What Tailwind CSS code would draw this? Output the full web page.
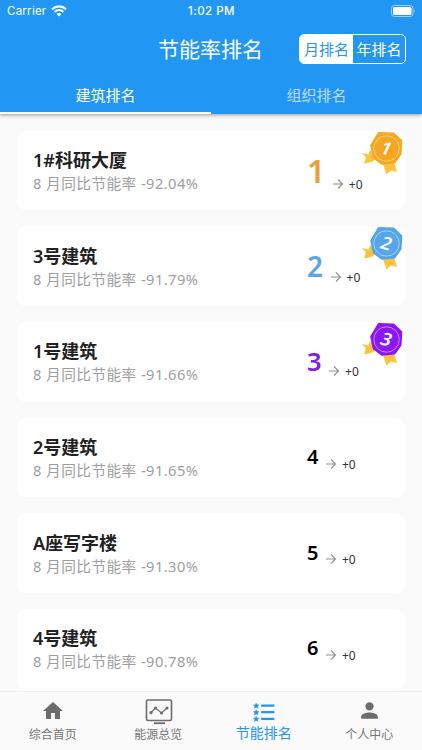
<!DOCTYPE html>
<html lang="zh-CN">
<head>
<meta charset="utf-8">
<title>节能率排名</title>
<script src="https://cdn.jsdelivr.net/npm/@tailwindcss/browser@4"></script>
</head>
<body class="w-[422px] h-[750px] overflow-hidden bg-[#fafafa] font-['Noto_Sans','Noto_Sans_CJK_SC',sans-serif]">
<div class="flex h-[750px] flex-col">
  <header class="relative z-10 h-[114px] shrink-0 bg-[#2196f3] text-white shadow-[0_1px_4px_rgba(0,0,0,0.4)]">
    <div class="grid h-[22px] grid-cols-3 items-center pr-[6px] pl-[7px] font-['Inter',sans-serif] text-[11.5px] leading-[22px]">
      <div class="flex items-center gap-[5px]"><span class="tracking-[0.25px]">Carrier</span>
        <svg class="-mt-px" width="16" height="12" viewBox="0 0 16 12" fill="none" stroke="white" stroke-width="2.1"><path d="M1 4.2C5 .4 11 .4 15 4.2M3.6 6.9C6.2 4.5 9.8 4.5 12.4 6.9"/><path d="M8 11.5 5.5 9Q8 6.9 10.5 9Z" fill="white" stroke="none"/></svg>
      </div>
      <div class="text-center font-medium tracking-[0.5px]">1:02 PM</div>
      <svg class="ml-auto" width="25" height="12" viewBox="0 0 25 12"><rect x=".5" y=".5" width="21.5" height="11" rx="3" fill="none" stroke="#9bd0fb"/><rect x="2" y="2" width="18.5" height="8" rx="1.6" fill="white"/><path d="M23.2 4v4Q24.7 6 23.2 4" fill="#9bd0fb"/></svg>
    </div>
    <div class="grid h-[54px] grid-cols-[1fr_auto_1fr] items-center pr-4">
      <h1 class="col-start-2 ml-[15px] text-[21px] leading-[54px] font-normal">节能率排名</h1>
      <div class="ml-auto flex h-[30px] w-[107px] overflow-hidden rounded-[5px] border border-white text-center text-[15px] leading-[29px]">
        <div class="w-[53px] bg-white text-[#2196f3]">月排名</div><div class="flex-1">年排名</div>
      </div>
    </div>
    <div class="grid h-[38px] grid-cols-2 text-center text-[15px] leading-[34px]">
      <div class="h-[38px] border-b-2 border-white pt-[2px]">建筑排名</div><div class="pt-[2px] text-white/70">组织排名</div>
    </div>
  </header>
  <main id="list" class="flex min-h-0 flex-1 flex-col gap-[16px] overflow-hidden px-[17px] pt-[16.5px]"></main>
  <nav class="grid h-[59px] shrink-0 grid-cols-4 border-t border-[#eeeeee] bg-[#fafafa] text-center text-[12px] text-[#757575]">
    <div class="flex flex-col items-center"><svg class="mt-[7px]" width="24" height="24" viewBox="0 0 24 24" fill="#6c6c6c"><path d="M10 20v-6h4v6h5v-8h3L12 3 2 12h3v8z"/></svg><span class="mt-[3px] leading-[18px]">综合首页</span></div>
    <div class="flex flex-col items-center"><svg class="relative left-[1px] mt-[7px]" width="28" height="26" viewBox="0 0 28 26" fill="none" stroke="#6c6c6c"><rect x="1.5" y="1" width="25" height="20.5" rx="1.5" stroke-width="1.6"/><path d="M9 24.2h11" stroke-width="1.8"/><path d="M6 13.5 10.5 9l6 5L22 9" stroke-width="1.2"/><g fill="#6c6c6c" stroke="none"><circle cx="6" cy="13.7" r="1.6"/><circle cx="10.5" cy="9" r="1.6"/><circle cx="16.5" cy="14" r="1.6"/><circle cx="22" cy="9" r="1.6"/></g></svg><span class="mt-px leading-[18px]">能源总览</span></div>
    <div class="flex flex-col items-center text-[14px] text-[#2196f3]"><svg class="mt-[10px]" width="22" height="20" viewBox="0 0 22 20" fill="#2196f3"><g stroke="#2196f3" stroke-width="2.2" stroke-linecap="round"><path d="M9 3.7h11.5M9 10.2h11.5M9 16.8h11.5"/></g><path id="star" d="M3.2 1 4 2.700 6 2.900 4.600 4.300 5 6.300 3.200 5.300 1.400 6.300 1.800 4.300.4 2.900 2.400 2.700Z" stroke="#2196f3" stroke-width=".4"/><use href="#star" y="6.6"/><use href="#star" y="13.2"/></svg><span class="leading-[22px]">节能排名</span></div>
    <div class="flex flex-col items-center"><svg class="mt-[6px]" width="25" height="25" viewBox="0 0 24 24" fill="#6c6c6c"><path d="M12 12a4 4 0 1 0 0-8 4 4 0 0 0 0 8zm0 2c-2.7 0-8 1.3-8 4v2h16v-2c0-2.7-5.3-4-8-4z"/></svg><span class="mt-[3px] leading-[18px]">个人中心</span></div>
  </nav>
</div>
<script>
const plain = 'text-[20px] font-semibold text-black';
const rows = [
  { name: '1#科研大厦', rate: '-92.04%', digit: 'text-[32px] font-semibold text-[#e6a23c]', top: 15.5, drop: 5.5, medal: ['#f5a623', '#ffd27a'] },
  { name: '3号建筑', rate: '-91.79%', digit: 'text-[28px] font-semibold text-[#5ba3ea]', top: 15, drop: 5, medal: ['#55a5ec', '#a5d4ff'] },
  { name: '1号建筑', rate: '-91.66%', digit: 'text-[25.5px] font-semibold text-[#8221e6]', top: 14.5, drop: 5, medal: ['#8c17f2', '#c58aff'] },
  { name: '2号建筑', rate: '-91.65%', digit: plain, top: 14.5, drop: 4.5 },
  { name: 'A座写字楼', rate: '-91.30%', digit: plain, top: 14.5, drop: 4.5 },
  { name: '4号建筑', rate: '-90.78%', digit: plain, top: 14.5, drop: 4.5 },
];
const medal = (n, [c, ring]) => `<svg class="absolute top-0 right-[2px]" width="42" height="44" viewBox="0 0 42 44">
  <path d="M9 19 7.500 23.500 1 22 5 26.500 3 32.500 12 30.500 16 26ZM22 33 25.500 43.500 30 39.500 36 41 33 31Z" fill="#ffc23d"/>
  <path d="M17.7 1.7 32.5 2.2 40.5 9.8 39.8 23 33.6 31.700 21 33 12.500 26.700 10 14.500Z" fill="${c}" stroke="${c}" stroke-width="1.600" stroke-linejoin="round"/>
  <circle cx="25.500" cy="17.500" r="12.700" fill="none" stroke="${ring}" stroke-width="1"/>
  <text x="0" y="6.300" transform="translate(25.500 17.500) rotate(16) skewX(-9)" text-anchor="middle" fill="white" font-size="18" font-weight="600">${n}</text></svg>`;
document.getElementById('list').innerHTML = rows.map((r, i) => `
  <section class="relative h-[79.7px] shrink-0 rounded-[9px] bg-white pl-[16px]">
    <div class="grid grid-cols-[274px_1fr]">
      <div class="pt-[16.5px]">
        <h2 class="text-[18px] leading-[26px] font-semibold text-[#212121]">${r.name}</h2>
        <p class="text-[14.7px] leading-[21px] tracking-[0.42px] text-[#9e9e9e]">8 月同比节能率 ${r.rate}</p>
      </div>
      <div class="flex items-baseline" style="padding-top:${r.top}px">
        <span class="leading-[50px] ${r.digit}">${i + 1}</span>
        <svg class="relative ml-[6.5px] shrink-0" style="top:${r.drop + 1}px" width="12" height="12" viewBox="0 0 12 12" fill="none" stroke="#909090" stroke-width="1.1"><path d="M1 6h9.500M6 1.500 10.500 6 6 10.500"/></svg>
        <span class="relative ml-[5px] text-[12px] text-[#333]" style="top:${r.drop}px">+0</span>
      </div>
    </div>
    ${r.medal ? medal(i + 1, r.medal) : ''}
  </section>`).join('');
</script>
</body>
</html>
